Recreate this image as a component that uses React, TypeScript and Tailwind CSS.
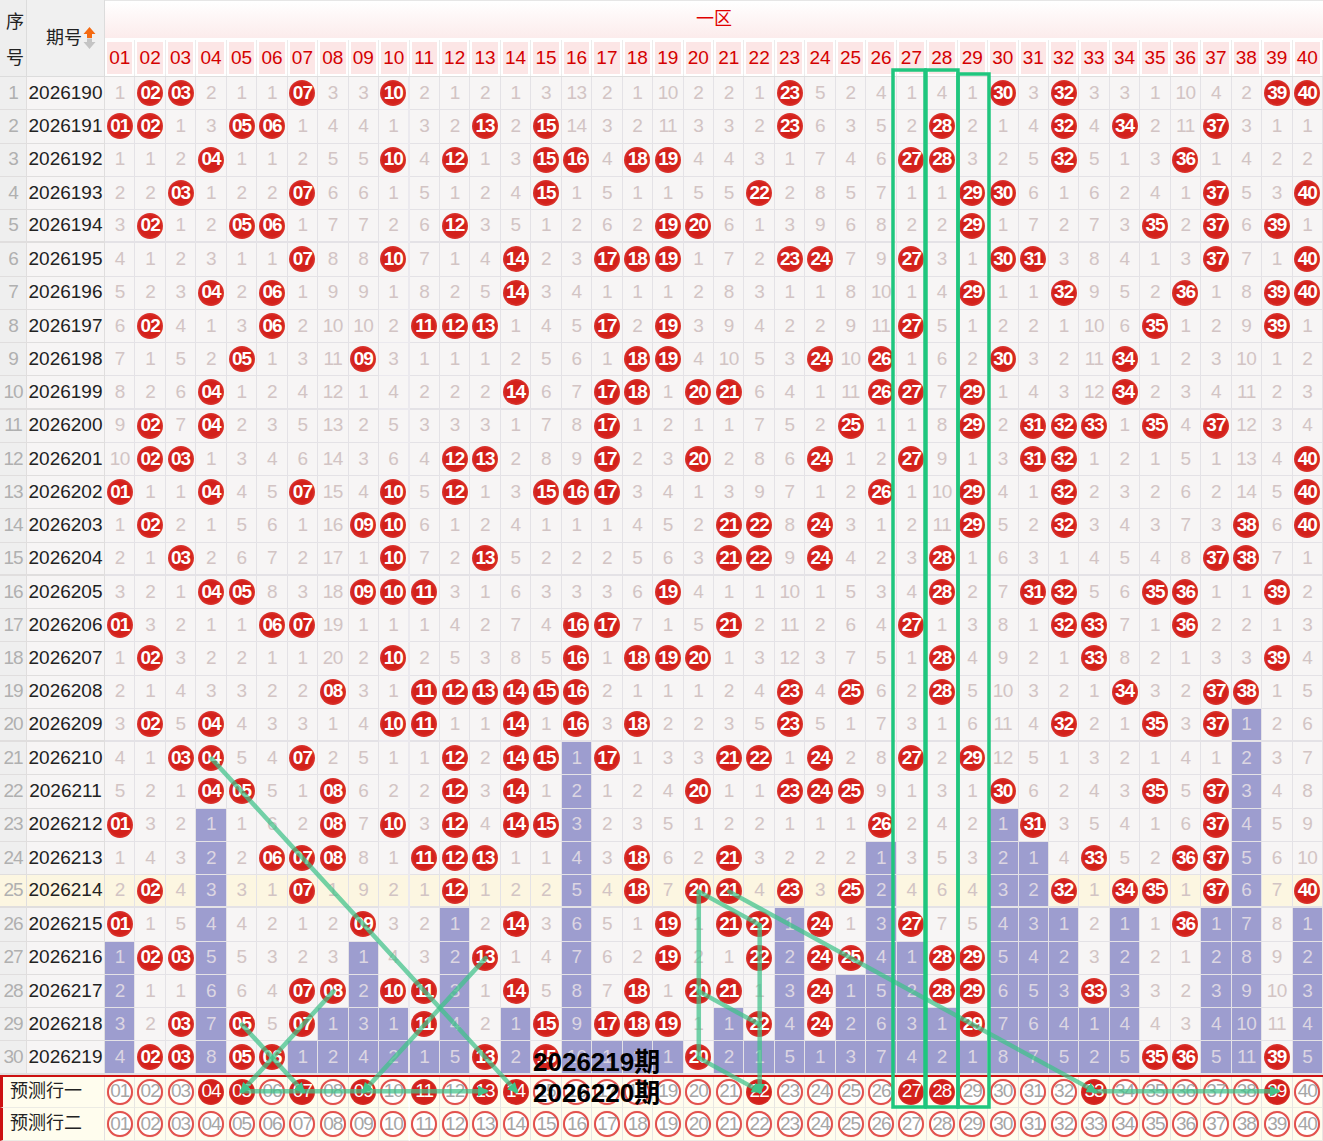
import React from 'react';

// numbers drawn per issue (zone one, 01-40)
const DRAWS: number[][] = [
  [2, 3, 7, 10, 23, 30, 32, 39, 40],
  [1, 2, 5, 6, 13, 15, 23, 28, 32, 34, 37],
  [4, 10, 12, 15, 16, 18, 19, 27, 28, 32, 36],
  [3, 7, 15, 22, 29, 30, 37, 40],
  [2, 5, 6, 12, 19, 20, 29, 35, 37, 39],
  [7, 10, 14, 17, 18, 19, 23, 24, 27, 30, 31, 37, 40],
  [4, 6, 14, 29, 32, 36, 39, 40],
  [2, 6, 11, 12, 13, 17, 19, 27, 35, 39],
  [5, 9, 18, 19, 24, 26, 30, 34],
  [4, 14, 17, 18, 20, 21, 26, 27, 29, 34],
  [2, 4, 17, 25, 29, 31, 32, 33, 35, 37],
  [2, 3, 12, 13, 17, 20, 24, 27, 31, 32, 40],
  [1, 4, 7, 10, 12, 15, 16, 17, 26, 29, 32, 40],
  [2, 9, 10, 21, 22, 24, 29, 32, 38, 40],
  [3, 10, 13, 21, 22, 24, 28, 37, 38],
  [4, 5, 9, 10, 11, 19, 28, 31, 32, 35, 36, 39],
  [1, 6, 7, 16, 17, 21, 27, 32, 33, 36],
  [2, 10, 16, 18, 19, 20, 28, 33, 39],
  [8, 11, 12, 13, 14, 15, 16, 23, 25, 28, 34, 37, 38],
  [2, 4, 10, 11, 14, 16, 18, 23, 32, 35, 37],
  [3, 4, 7, 12, 14, 15, 17, 21, 22, 24, 27, 29],
  [4, 5, 8, 12, 14, 20, 23, 24, 25, 30, 35, 37],
  [1, 8, 10, 12, 14, 15, 26, 31, 37],
  [6, 7, 8, 11, 12, 13, 18, 21, 33, 36, 37],
  [2, 7, 12, 18, 20, 21, 23, 25, 32, 34, 35, 37, 40],
  [1, 9, 14, 19, 21, 22, 24, 27, 36],
  [2, 3, 13, 19, 22, 24, 25, 28, 29],
  [7, 8, 10, 11, 14, 18, 20, 21, 24, 28, 29, 33],
  [3, 5, 7, 11, 15, 17, 18, 19, 22, 24, 29],
  [2, 3, 5, 6, 13, 15, 20, 35, 36, 39],
];

// omission carried in before the first row
const INIT = [
  0, 0, 0, 1, 0, 0, 0, 2, 2, 0, 1, 0, 1, 0, 2, 12, 1, 0, 9, 1,
  1, 0, 0, 4, 1, 3, 0, 3, 0, 0, 2, 0, 2, 2, 0, 9, 3, 1, 0, 0,
];

const PREDICT = [4, 5, 7, 9, 11, 13, 14, 22, 27, 28, 33, 39];
const HIGHLIGHT = 24;

type Cell = { v: number; hit: boolean; tail: boolean };

function buildRows(): Cell[][] {
  const miss = [...INIT];
  const rows = DRAWS.map((d) =>
    Array.from({ length: 40 }, (_, i) => {
      if (d.includes(i + 1)) {
        miss[i] = 0;
        return { v: i + 1, hit: true, tail: false };
      }
      miss[i] += 1;
      return { v: miss[i], hit: false, tail: false };
    })
  );
  for (let c = 0; c < 40; c++) {
    for (let r = rows.length - 1; r >= 0 && !rows[r][c].hit; r--) rows[r][c].tail = true;
  }
  return rows;
}

const pad = (n: number) => String(n).padStart(2, '0');
const COLS = 'grid grid-cols-[27px_78px_repeat(40,minmax(0,1fr))]';

// overlay coordinates
const cx = (c: number) => 105 + (c - 0.5) * 30.45;
const cy = (r: number) => 77 + (r - 0.5) * 33.25;

const LINES: [number, number, number, number, boolean][] = [
  [4, 21, 14, 31, true],
  [8, 28, 5, 31, true],
  [5, 29, 7, 31, true],
  [5, 31, 13, 31, true],
  [13, 27, 9, 31, true],
  [20, 25, 20, 30, false],
  [20, 30, 22, 31, true],
  [20, 25, 22, 26, false],
  [22, 26, 22, 31, true],
  [20, 28, 22, 29, false],
  [21, 25, 33, 31, true],
  [33, 31, 39, 31, true],
];

function Ball({ n }: { n: number }) {
  return (
    <span className="flex h-[26px] w-[26px] items-center justify-center rounded-full bg-[radial-gradient(circle,#d3211b_56%,#df3f3a_78%,#f4c4c2_100%)] text-[19px] font-bold tracking-[-1px] text-white">
      {pad(n)}
    </span>
  );
}

function SortIcon() {
  return (
    <svg width="13" height="24" viewBox="0 0 13 24" className="ml-[1px]">
      <path d="M6.5 1 L12.5 8 H9 V12 H4 V8 H0.5 Z" fill="#f46a12" />
      <path d="M6.5 23 L12.5 16 H9 V12.5 H4 V16 H0.5 Z" fill="#c4c4c4" />
    </svg>
  );
}

export default function App() {
  const rows = buildRows();
  return (
    <div className="relative h-[1141px] w-[1323px] overflow-hidden bg-white font-['Liberation_Sans','Noto_Sans_CJK_SC',sans-serif]">
      {/* header */}
      <div className="flex h-[77px]">
        <div className="w-[27px] border-r border-b border-[#dcdcdc] bg-[#eeeeee] pt-[4px] pl-[6px] text-[18px] leading-[36px] text-[#222]">序号</div>
        <div className="flex w-[78px] items-center justify-end border-r border-b border-[#dcdcdc] bg-[#f0f0f0] pr-[8px] text-[18px] text-[#222]">
          期号
          <SortIcon />
        </div>
        <div className="flex flex-1 flex-col">
          <div className="flex h-[40px] items-center justify-center border-t border-b-2 border-t-[#e6e6e6] border-b-white bg-[linear-gradient(#ffffff,#fcecec)] text-[18px] text-[#e00000]">一区</div>
          <div className="grid flex-1 grid-cols-[repeat(40,minmax(0,1fr))] border-b border-[#dedede] bg-white">
            {Array.from({ length: 40 }, (_, i) => (
              <div key={i} className="border-r border-[#ececec] p-[2px]">
                <div className="flex h-full items-center justify-center bg-[#fce6e6] text-[19px] text-[#d40000]">{pad(i + 1)}</div>
              </div>
            ))}
          </div>
        </div>
      </div>

      {/* data rows */}
      {rows.map((cells, r) => {
        const hl = r === HIGHLIGHT;
        const thick = (r + 1) % 5 === 0 ? 'border-b-2' : 'border-b';
        return (
          <div key={r} className={`${COLS} h-[33.25px]`}>
            <div className={`flex items-center justify-center border-r ${thick} border-[#e0dede] text-[19px] tracking-[-1px] text-[#b0b0b0] ${hl ? 'bg-[#fcf6e1]' : 'bg-[#efefef]'}`}>{r + 1}</div>
            <div className={`flex items-center justify-center border-r ${thick} border-[#e0dede] text-[19px] text-[#222] ${hl ? 'bg-[#fcf6e1]' : 'bg-[#f7f5f5]'}`}>{2026190 + r}</div>
            {cells.map((c, i) => (
              <div
                key={i}
                className={`flex items-center justify-center ${thick} text-[19px] tracking-[-0.5px] ${i === 9 ? 'border-r-2 border-[#ebe9ee]' : 'border-r border-[#e4e2e6]'} ${
                  c.hit ? (hl ? 'bg-[#fcf6e1]' : 'bg-[#f7f5f5]') : c.tail ? 'bg-[#9d9dcf] text-[#dcd6e2]' : hl ? 'bg-[#fcf6e1] text-[#d2c4c4]' : 'bg-[#f7f5f5] text-[#d2c4c4]'
                }`}
              >
                {c.hit ? <Ball n={c.v} /> : c.v}
              </div>
            ))}
          </div>
        );
      })}

      {/* prediction rows */}
      {['预测行一', '预测行二'].map((label, p) => (
        <div key={label} className={`${COLS} h-[33.25px] ${p === 0 ? 'border-t-2 border-[#cc1111]' : ''}`}>
          <div className="col-span-2 flex items-center border-l-[3px] border-r border-b border-l-[#cc1111] border-r-[#e2e0e0] border-b-[#ecebe4] bg-[#fffdee] pl-[7px] text-[18px] text-[#222]">{label}</div>
          {Array.from({ length: 40 }, (_, i) => {
            const on = p === 0 && PREDICT.includes(i + 1);
            return (
              <div key={i} className={`flex items-center justify-center border-b border-[#ecebe4] bg-[#fffdee] ${i === 9 ? 'border-r-2 border-r-white' : 'border-r border-r-[#e8e6e2]'}`}>
                {on ? (
                  <span className="flex h-[26px] w-[26px] items-center justify-center rounded-full bg-[radial-gradient(circle,#d3211b_60%,#e24a45_85%,#f3c0bd_100%)] text-[19px] tracking-[-1px] text-white">{pad(i + 1)}</span>
                ) : (
                  <span className="flex h-[26px] w-[26px] items-center justify-center rounded-full border-2 border-[#e2514d] bg-white text-[19px] tracking-[-1px] text-[#a6a6a6] shadow-[0_0_1px_#f0a0a0]">{pad(i + 1)}</span>
                )}
              </div>
            );
          })}
        </div>
      ))}

      {/* annotations */}
      <svg className="pointer-events-none absolute left-0 top-0" width="1323" height="1141" viewBox="0 0 1323 1141">
        <defs>
          <marker id="arr" viewBox="0 0 10 10" refX="7" refY="5" markerWidth="2.4" markerHeight="2.4" orient="auto">
            <path d="M0 0 L10 5 L0 10 Z" fill="#41c38a" />
          </marker>
        </defs>
        <g stroke="#3fc289" strokeOpacity="0.72" strokeWidth="4.5" strokeLinecap="round" fill="none">
          {LINES.map(([c1, r1, c2, r2, arrow], k) => (
            <line key={k} x1={cx(c1)} y1={cy(r1)} x2={cx(c2)} y2={cy(r2)} markerEnd={arrow ? 'url(#arr)' : undefined} />
          ))}
        </g>
        <g stroke="#1fc67e" strokeWidth="3.5" fill="none">
          <rect x="893" y="70" width="32" height="1037" />
          <rect x="926" y="70" width="32" height="1037" />
          <rect x="958" y="74" width="31" height="1033" />
        </g>
      </svg>

      <div className="absolute left-[533px] top-[1047px] text-[26px] font-bold leading-[30px] text-black">2026219期</div>
      <div className="absolute left-[533px] top-[1078px] text-[26px] font-bold leading-[30px] text-black">2026220期</div>
    </div>
  );
}
